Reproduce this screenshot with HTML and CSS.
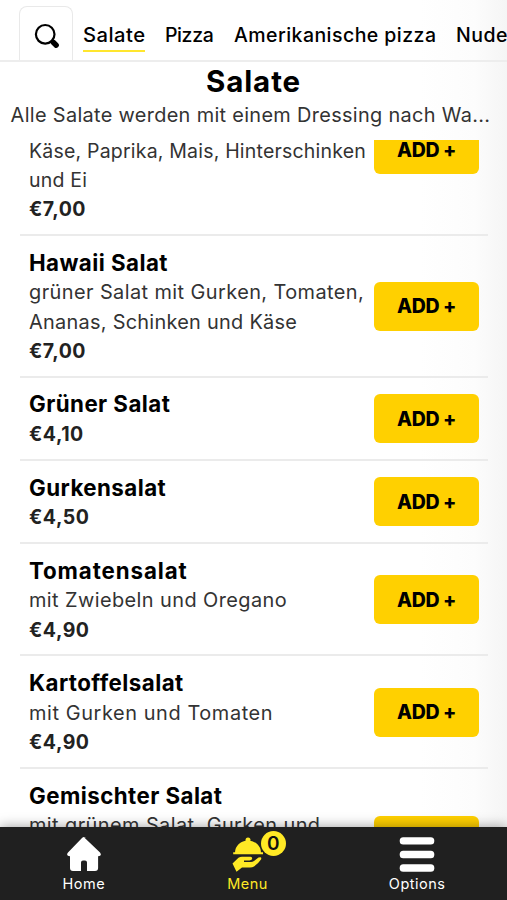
FILE: index.html
```html
<!DOCTYPE html>
<html lang="de">
<head>
<meta charset="utf-8">
<title>Salate</title>
<link rel="stylesheet" href="styles.css">
</head>
<body>
<div class="app">
  <nav class="categories">
    <button class="search" aria-label="Suche">
      <svg width="28" height="28" viewBox="0 0 28 28"><circle cx="12.2" cy="11.3" r="9.3" fill="none" stroke="#000" stroke-width="2.2"/><path d="M18.7 18 20.3 19.5" stroke="#000" stroke-width="2.6"/><path d="M20.2 19.3 23.2 22.2" stroke="#000" stroke-width="5.4" stroke-linecap="round"/></svg>
    </button>
    <a class="tab active">Salate</a>
    <a class="tab pizza">Pizza</a>
    <a class="tab american">Amerikanische pizza</a>
    <a class="tab nudeln">Nude</a>
  </nav>
  <header class="heading">
    <h1>Salate</h1>
    <p>Alle Salate werden mit einem Dressing nach Wa...</p>
  </header>
  <main class="viewport">
    <ul class="list">
      <li class="item first"><div class="info"><p class="tight">Käse, Paprika, Mais, Hinterschinken<br>und Ei</p><b>€7,00</b></div><button class="add">ADD +</button></li>
      <li class="item"><div class="info"><h2>Hawaii Salat</h2><p>grüner Salat mit Gurken, Tomaten,<br><span class="medium">Ananas, Schinken und Käse</span></p><b>€7,00</b></div><button class="add">ADD +</button></li>
      <li class="item"><div class="info"><h2>Grüner Salat</h2><b>€4,10</b></div><button class="add">ADD +</button></li>
      <li class="item"><div class="info"><h2>Gurkensalat</h2><b>€4,50</b></div><button class="add">ADD +</button></li>
      <li class="item"><div class="info"><h2 class="wide">Tomatensalat</h2><p>mit Zwiebeln und Oregano</p><b>€4,90</b></div><button class="add">ADD +</button></li>
      <li class="item"><div class="info"><h2>Kartoffelsalat</h2><p class="loose">mit Gurken und Tomaten</p><b>€4,90</b></div><button class="add">ADD +</button></li>
      <li class="item last"><div class="info"><h2>Gemischter Salat</h2><p>mit grünem Salat, Gurken und</p></div><button class="add"></button></li>
    </ul>
  </main>
  <footer class="bar">
    <a class="dest home"><svg width="36" height="36" viewBox="0 0 36 36"><path d="M18 1.2 34 16.4Q36.5 19.8 32.1 20.2V32Q32.1 35 29 35H21V26.5Q21 24.5 19 24.5H17Q15 24.5 15 26.5V35H7Q4 35 4 32V20.2Q-.5 19.8 2 16.4L16 2Q18 .2 20 2Z" fill="#fff"/></svg><span>Home</span></a>
    <a class="dest menu"><svg width="36" height="36" viewBox="0 0 36 36"><g fill="#ffe925"><circle cx="18" cy="4" r="2.5"/><path d="M5 16.6A13 12.2 0 0 1 31 16.6ZM3.2 16.2H33V18.3H3.2Z"/><path d="M2.5 27.5 8.5 21.8Q10 20.8 12 20.8H20.5Q23 21.2 21.8 23.6Q21.3 24.4 19.5 24.4H14V26H21Q22.5 26 24 25L28.5 21.6Q32.3 20.4 31 23.4Q28 27.8 24 30.4Q22.5 31.4 20 31.4H12L6.5 35.8Z"/></g></svg><span class="badge">0</span><span>Menu</span></a>
    <a class="dest options"><svg width="36" height="36" viewBox="0 0 36 36"><g fill="#fff"><rect x=".7" y="1.2" width="34.6" height="7.4" rx="3.5"/><rect x=".7" y="14.8" width="34.6" height="7.4" rx="3.5"/><rect x=".7" y="28.3" width="34.6" height="7.4" rx="3.5"/></g></svg><span>Options</span></a>
  </footer>
</div>
</body>
</html>
```
FILE: styles.css
```css
* { box-sizing: border-box; margin: 0; padding: 0; }
body { font-family: Inter, "Liberation Sans", sans-serif; color: #000; }
button { font: inherit; color: inherit; border: 0; background: none; }
.app { width: 507px; height: 900px; display: flex; flex-direction: column; overflow: hidden; background: linear-gradient(90deg, #fff 420px, #fcfcfc 475px, #f5f5f5 100%); }
.categories { height: 62px; flex: none; display: flex; align-items: flex-end; gap: 20px; padding-left: 19px; border-bottom: 2px solid #ededed; overflow: hidden; white-space: nowrap; }
.search { width: 54px; height: 54px; margin-right: -10px; flex: none; border: 1.5px solid #e9e9e9; border-bottom: 0; border-radius: 8px 8px 0 0; display: grid; place-items: center; padding: 7px 0 0 2px; }
.tab { flex: none; height: 31px; margin-bottom: 8px; line-height: 28px; font-size: 19.5px; font-weight: 500; }
.active { width: 62px; font-size: 20.2px; letter-spacing: .5px; border-bottom: 2.5px solid #ffe62e; }
.pizza { width: 49px; letter-spacing: -.4px; }
.american { width: 202px; letter-spacing: .45px; }
.nudeln { letter-spacing: .5px; }
.heading { height: 78px; flex: none; text-align: center; }
.heading h1 { font-size: 29.5px; line-height: 38px; font-weight: 650; letter-spacing: .9px; }
.heading p { font-size: 19.9px; line-height: 30px; color: #333; white-space: nowrap; padding-right: 6px; letter-spacing: .33px; }
.viewport { flex: 1; min-height: 0; overflow: hidden; }
.list { list-style: none; margin-top: -76px; padding: 0 19px 0 20px; }
.item { display: flex; align-items: center; justify-content: space-between; padding: 10.8px 9px 9.6px; border-bottom: 2px solid #ebebeb; }
.first { height: 172px; }
.first .info { align-self: flex-end; }
.info { width: 345px; flex: none; white-space: nowrap; margin-right: -5px; }
.info h2 { font-size: 22.3px; line-height: 31.6px; font-weight: 650; letter-spacing: .45px; }
.info h2.wide { letter-spacing: .9px; }
.info p { font-size: 19.9px; line-height: 29.2px; color: #333; letter-spacing: .43px; }
.info p.tight { font-size: 19.5px; letter-spacing: .2px; }
.info p .medium { letter-spacing: .28px; }
.info p.loose { letter-spacing: .6px; }
.info b { display: block; font-size: 19.5px; line-height: 29.2px; font-weight: 700; color: #222; letter-spacing: .5px; }
.add { width: 105px; height: 49px; flex: none; border-radius: 6px; background: #ffd000; font-size: 19.5px; font-weight: 800; letter-spacing: -.4px; }
.last { align-items: flex-start; border: 0; }
.last .add { margin-top: 36px; }
.bar { position: relative; height: 73px; flex: none; display: flex; background: #202020; color: #fff; box-shadow: 0 0 12px rgba(0,0,0,.4); }
.dest { position: relative; display: flex; flex-direction: column; align-items: center; padding-top: 9px; font-size: 14.5px; line-height: 24px; letter-spacing: .5px; }
.home { width: 168px; }
.menu { width: 160px; color: #ffe925; }
.options { width: 180px; }
.badge { position: absolute; left: 93px; top: 4px; width: 25px; height: 25px; border-radius: 50%; background: #ffe925; color: #111; text-align: center; font-size: 19px; line-height: 26px; font-weight: 600; letter-spacing: 0; }
```
